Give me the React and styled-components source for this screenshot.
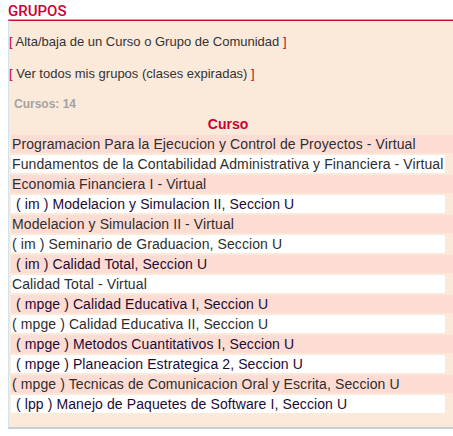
import styled, { createGlobalStyle } from 'styled-components'

const Global = createGlobalStyle`
    body {
        margin: 0;
        overflow: hidden;
        background: #ffffff;
        font-family: "Liberation Sans", Arial, sans-serif;
    }
`

const Page = styled.div`
    padding-left: 8px;
    width: 445px;
`

const Title = styled.h2`
    margin: 0;
    height: 20px;
    box-sizing: border-box;
    padding-top: 4px;
    font-family: Roboto, "Liberation Sans", sans-serif;
    font-weight: 500;
    font-size: 15px;
    line-height: 15px;
    color: #cc0033;
    border-bottom: 1px solid #a9a9b0;
`

const Panel = styled.div`
    background: #fbe9da;
    border-top: 1px solid #c8102e;
    border-left: 1px solid #d3e3ee;
    border-bottom: 2px solid #c6ced6;
    padding: 13px 0 14px 0;
    display: flex;
    flex-direction: column;
`

const Action = styled.div`
    font-size: 13px;
    line-height: 16px;
    color: #333333;
    margin-bottom: ${(props) => props.gap};
    span {
        color: #cc0033;
    }
`

const Count = styled.div`
    font-size: 12px;
    font-weight: bold;
    line-height: 14px;
    color: #a3a3a3;
    padding-left: 5px;
    margin-bottom: 5px;
`

const Table = styled.div`
    display: flex;
    flex-direction: column;
    gap: 2px;
    padding-left: 2px;
    width: 434px;
`

const Head = styled.div`
    text-align: center;
    font-size: 14px;
    font-weight: bold;
    line-height: 17px;
    color: #cc0033;
`

const Row = styled.div`
    height: 18px;
    line-height: 18px;
    font-size: 14px;
    letter-spacing: 0.1px;
    white-space: nowrap;
    background: ${(props) => (props.pink ? '#fddcd4' : '#ffffff')};
    margin-right: ${(props) => (props.pink ? '-8px' : '0')};
    color: ${(props) => (props.link ? '#1c0b33' : '#2e2e2e')};
    padding-left: ${(props) => (props.link ? '5px' : '1px')};
`

const cursos = [
    ['Programacion Para la Ejecucion y Control de Proyectos - Virtual', false],
    ['Fundamentos de la Contabilidad Administrativa y Financiera - Virtual', false],
    ['Economia Financiera I - Virtual', false],
    ['( im ) Modelacion y Simulacion II, Seccion U', true],
    ['Modelacion y Simulacion II - Virtual', false],
    ['( im ) Seminario de Graduacion, Seccion U', false],
    ['( im ) Calidad Total, Seccion U', true],
    ['Calidad Total - Virtual', false],
    ['( mpge ) Calidad Educativa I, Seccion U', true],
    ['( mpge ) Calidad Educativa II, Seccion U', false],
    ['( mpge ) Metodos Cuantitativos I, Seccion U', true],
    ['( mpge ) Planeacion Estrategica 2, Seccion U', true],
    ['( mpge ) Tecnicas de Comunicacion Oral y Escrita, Seccion U', false],
    ['( lpp ) Manejo de Paquetes de Software I, Seccion U', true],
]

function App() {
    return (
        <Page>
            <Global />
            <Title>GRUPOS</Title>
            <Panel>
                <Action gap="16px"><span>[</span> Alta/baja de un Curso o Grupo de Comunidad <span>]</span></Action>
                <Action gap="15px"><span>[</span> Ver todos mis grupos (clases expiradas) <span>]</span></Action>
                <Count>Cursos: 14</Count>
                <Table>
                    <Head>Curso</Head>
                    {cursos.map(([name, link], i) => (
                        <Row key={name} pink={i % 2 === 0} link={link}>{name}</Row>
                    ))}
                </Table>
            </Panel>
        </Page>
    )
}

export default App
